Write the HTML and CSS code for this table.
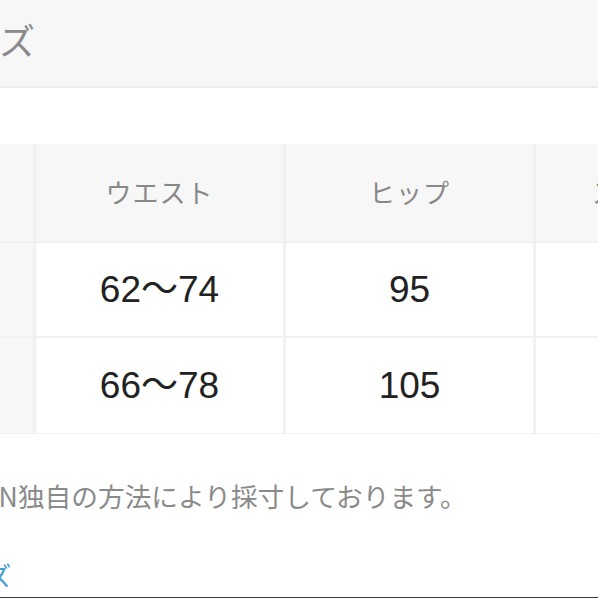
FILE: index.html
```html
<!DOCTYPE html>
<html lang="ja">
<head>
<meta charset="utf-8">
<title>サイズ</title>
<link rel="stylesheet" href="styles.css">
</head>
<body>
<div class="page">
  <header class="title-bar">
    <h2 class="title">サイズ</h2>
  </header>

  <div class="size-table">
    <div class="cell side"></div>
    <div class="cell head">ウエスト</div>
    <div class="cell head">ヒップ</div>
    <div class="cell head">スカート丈</div>

    <div class="cell side"></div>
    <div class="cell data">62〜74</div>
    <div class="cell data">95</div>
    <div class="cell data"></div>

    <div class="cell side"></div>
    <div class="cell data">66〜78</div>
    <div class="cell data">105</div>
    <div class="cell data"></div>
  </div>

  <p class="note">ZOZOTOWN独自の方法により採寸しております。</p>

  <a class="link" href="#">サイズ</a>

  <div class="bottom-bar"></div>
</div>
</body>
</html>
```

FILE: styles.css
```css
html, body {
  margin: 0;
  padding: 0;
  background: #ffffff;
}

body {
  width: 598px;
  height: 598px;
  overflow: hidden;
  font-family: "Noto Sans CJK JP", "Noto Sans", sans-serif;
}

.page {
  display: flex;
  flex-direction: column;
  width: 598px;
}

.title-bar {
  background: #f7f7f7;
  border-bottom: 2px solid #ececec;
  display: flex;
  align-items: center;
  padding-bottom: 8px;
  box-sizing: content-box;
  height: 78px;
}

.title {
  margin: 0 0 0 -72px;
  font-size: 36px;
  font-weight: 400;
  color: #8a8a8a;
  line-height: 1;
  white-space: nowrap;
}

.size-table {
  margin-top: 56px;
  display: grid;
  grid-template-columns: 33px 247px 247px 247px;
  grid-template-rows: 97px 93px 95px;
  column-gap: 3px;
  row-gap: 2px;
  width: max-content;
  background: #f1f1f1;
  padding-bottom: 1px;
}

.cell {
  display: flex;
  align-items: center;
  justify-content: center;
  white-space: nowrap;
}

.side {
  background: #f7f7f7;
}

.head {
  background: #f7f7f7;
  color: #888888;
  font-size: 26px;
  letter-spacing: 1px;
  padding-bottom: 2px;
}

.data {
  background: #ffffff;
  color: #222222;
  font-family: "Liberation Sans", "Noto Sans CJK JP", sans-serif;
  font-size: 37px;
  line-height: 40px;
}

.note {
  margin: 44px 0 0 -129px;
  font-size: 26.7px;
  line-height: 36px;
  color: #8a8a8a;
  white-space: nowrap;
}

.link {
  display: block;
  margin: 43px 0 0 -66px;
  font-size: 26px;
  line-height: 36px;
  color: #4c9fd1;
  text-decoration: none;
  white-space: nowrap;
}

.bottom-bar {
  margin-top: 4px;
  height: 2px;
  background: #3a3a3a;
}
```
